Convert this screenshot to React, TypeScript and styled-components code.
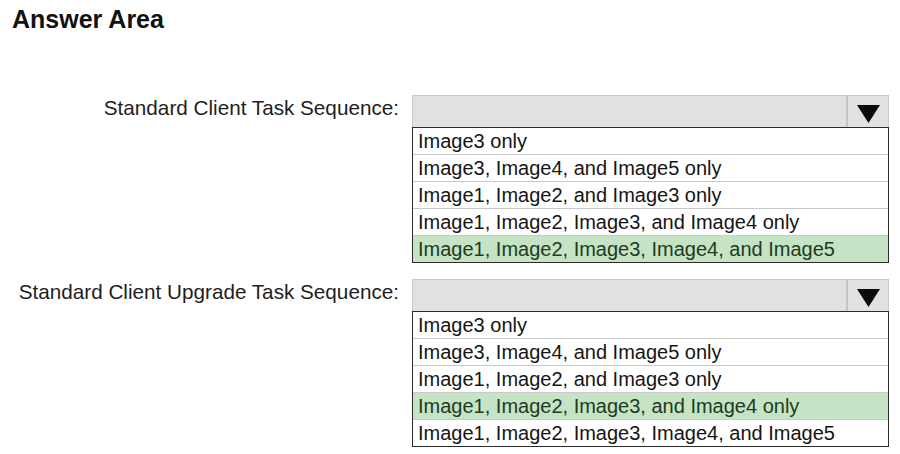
import styled, { createGlobalStyle } from "styled-components";

const GlobalStyle = createGlobalStyle`
  html, body {
    margin: 0;
    padding: 0;
    background: #ffffff;
  }
  body {
    font-family: "Liberation Sans", Arial, sans-serif;
  }
`;

const Page = styled.div`
  width: 900px;
  height: 454px;
  padding: 5px 0 0 12px;
  box-sizing: border-box;
  background: #ffffff;
  overflow: hidden;
`;

const Title = styled.h1`
  margin: 0;
  font-size: 25px;
  line-height: 28px;
  font-weight: 700;
  color: #111111;
`;

const Form = styled.div`
  margin-top: 62px;
  display: grid;
  grid-template-columns: 387px 477px;
  column-gap: 13px;
  row-gap: 16px;
  align-items: start;
`;

const Label = styled.div`
  text-align: right;
  font-size: 20.7px;
  line-height: 26px;
  color: #1e1e1e;
  white-space: nowrap;
`;

const Select = styled.div`
  display: flex;
  flex-direction: column;
`;

const Bar = styled.div`
  height: 32px;
  box-sizing: border-box;
  display: flex;
  justify-content: flex-end;
  background: #e1e1e1;
  border: 1px solid #cbcbcb;
  border-bottom: none;
`;

const ArrowButton = styled.div`
  width: 42px;
  display: flex;
  align-items: center;
  justify-content: center;
  padding-top: 5px;
  box-sizing: border-box;
  border-left: 2px solid #c4c4c4;
`;

const List = styled.ul`
  list-style: none;
  margin: 0;
  padding: 0;
  border: 1px solid #2b2b2b;
  background: #ffffff;
`;

const Option = styled.li<{ $picked?: boolean }>`
  height: 26px;
  padding-left: 5px;
  font-size: 20px;
  line-height: 26px;
  white-space: nowrap;
  color: ${(p) => (p.$picked ? "#1d3b1d" : "#151515")};
  background: ${(p) => (p.$picked ? "#c5e3c5" : "#ffffff")};
  & + & {
    border-top: 1px solid #c9c9c9;
  }
`;

const options = [
  "Image3 only",
  "Image3, Image4, and Image5 only",
  "Image1, Image2, and Image3 only",
  "Image1, Image2, Image3, and Image4 only",
  "Image1, Image2, Image3, Image4, and Image5",
];

function Arrow() {
  return (
    <svg width="23" height="18" viewBox="0 0 23 18">
      <polygon points="0,0 23,0 11.5,18" fill="#0a0a0a" />
    </svg>
  );
}

function Dropdown({ picked }: { picked: number }) {
  return (
    <Select>
      <Bar>
        <ArrowButton>
          <Arrow />
        </ArrowButton>
      </Bar>
      <List>
        {options.map((o, i) => (
          <Option key={o} $picked={i === picked}>
            {o}
          </Option>
        ))}
      </List>
    </Select>
  );
}

export default function App() {
  return (
    <>
      <GlobalStyle />
      <Page>
        <Title>Answer Area</Title>
        <Form>
          <Label>Standard Client Task Sequence:</Label>
          <Dropdown picked={4} />
          <Label>Standard Client Upgrade Task Sequence:</Label>
          <Dropdown picked={3} />
        </Form>
      </Page>
    </>
  );
}
